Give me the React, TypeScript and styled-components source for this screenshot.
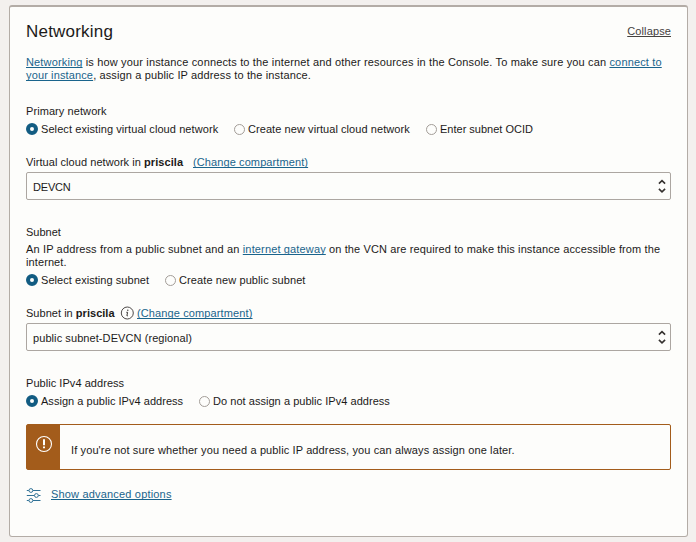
import React from 'react';
import styled, { createGlobalStyle } from 'styled-components';

const GlobalStyle = createGlobalStyle`
  * { box-sizing: border-box; }
  body {
    margin: 0;
    background: #f3f0ee;
    color: #1c1a19;
    font-family: "Liberation Sans", Arial, Helvetica, sans-serif;
    font-size: 11px;
    line-height: 13px;
  }
`;

const Page = styled.main`
  height: 542px;
  padding: 5px 8px 5px 9px;
  overflow: hidden;
`;

const Panel = styled.section`
  height: 532px;
  padding: 14px 16px 0;
  background: #fdfdfb;
  border: 1px solid #b3aca6;
  border-top-width: 2px;
  border-radius: 3px;
`;

const Header = styled.header`
  display: flex;
  justify-content: space-between;
  align-items: center;
  height: 20px;
`;

const Title = styled.h1`
  margin: 2px 0 0;
  font-size: 17px;
  line-height: 20px;
  font-weight: 400;
  letter-spacing: 0.2px;
`;

const Link = styled.a<{ $muted?: boolean; $track?: number }>`
  color: ${(p) => (p.$muted ? '#45413e' : '#1a648c')};
  letter-spacing: ${(p) => (p.$track === undefined ? 'inherit' : `${p.$track}px`)};
  text-decoration: underline;
  text-decoration-thickness: 1px;
  text-underline-offset: 1px;
  text-decoration-skip-ink: none;
`;

const Line = styled.div<{ $track?: number }>`
  height: 13px;
  white-space: nowrap;
  letter-spacing: ${(p) => p.$track ?? 0}px;
`;

const Intro = styled.div`
  margin-top: 15px;
`;

const Group = styled.div<{ $top: number }>`
  margin-top: ${(p) => p.$top}px;
`;

const Description = styled.div`
  margin-top: 4px;
`;

const RadioRow = styled.div`
  display: flex;
  gap: 16px;
  height: 13px;
  margin-top: 5px;
`;

const RadioLabel = styled.label<{ $width: number }>`
  display: flex;
  flex: none;
  width: ${(p) => p.$width}px;
  white-space: nowrap;
`;

const Dot = styled.span<{ $on?: boolean }>`
  flex: none;
  width: ${(p) => (p.$on ? 12 : 11)}px;
  height: ${(p) => (p.$on ? 12 : 11)}px;
  margin: ${(p) => (p.$on ? '0 3px 0 0' : '1px 3px 0 0')};
  border-radius: 50%;
  border: ${(p) => (p.$on ? '4px solid #125c82' : '1px solid #a39d98')};
  background: #fdfdfb;
`;

const FieldLabel = styled.div`
  display: flex;
  height: 13px;
  margin-top: 20px;
  white-space: nowrap;
`;

const FieldName = styled.span<{ $width: number; $track: number }>`
  flex: none;
  width: ${(p) => p.$width}px;
  letter-spacing: ${(p) => p.$track}px;
`;

const Tracked = styled.span<{ $track: number }>`
  letter-spacing: ${(p) => p.$track}px;
`;

const InfoIcon = styled.svg`
  flex: none;
  width: 14px;
  height: 14px;
  margin: -1px 3px 0 0;
`;

const SelectBox = styled.div`
  display: flex;
  justify-content: space-between;
  align-items: center;
  height: 28px;
  margin-top: 3px;
  padding: 2px 4px 0 6px;
  border: 1px solid #aca6a1;
  border-radius: 2px;
`;

const Arrows = styled.svg`
  width: 8px;
  height: 14px;
  margin-top: -2px;
`;

const Notice = styled.div`
  display: flex;
  height: 46px;
  margin-top: 16px;
  border: 1px solid #a35c1b;
  border-radius: 2px;
`;

const NoticeMark = styled.div`
  display: flex;
  justify-content: center;
  width: 33px;
  padding-top: 10px;
  background: #a35c1b;
`;

const NoticeText = styled.div`
  padding: 19px 0 0 11px;
`;

const Advanced = styled.div`
  display: flex;
  height: 16px;
  margin-top: 18px;
`;

const SlidersIcon = styled.svg`
  width: 16px;
  height: 16px;
  margin-right: 9px;
`;

type Option = { text: string; width: number; track: number; on?: boolean };

function Radios({ options }: { options: Option[] }) {
  return (
    <RadioRow>
      {options.map((o) => (
        <RadioLabel key={o.text} $width={o.width}>
          <Dot $on={o.on} />
          <Tracked $track={o.track}>{o.text}</Tracked>
        </RadioLabel>
      ))}
    </RadioRow>
  );
}

function Select({ value, track }: { value: string; track: number }) {
  return (
    <SelectBox>
      <Tracked $track={track}>{value}</Tracked>
      <Arrows viewBox="0 0 8 14" fill="none" stroke="#35312f" strokeWidth="1.6">
        <path d="M.9 4.6 4 1.7 7.1 4.6M.9 9.9 4 12.8 7.1 9.9" />
      </Arrows>
    </SelectBox>
  );
}

export default function App() {
  return (
    <Page>
      <GlobalStyle />
      <Panel>
        <Header>
          <Title>Networking</Title>
          <Link $muted $track={0.12}>Collapse</Link>
        </Header>
        <Intro>
          <Line $track={0.153}>
            <Link>Networking</Link> is how your instance connects to the internet and other resources in the
            Console. To make sure you can <Link>connect to</Link>
          </Line>
          <Line $track={0.13}>
            <Link>your instance</Link>, assign a public IP address to the instance.
          </Line>
        </Intro>

        <Group $top={23}>
          <Line $track={0.08}>Primary network</Line>
          <Radios
            options={[
              { text: 'Select existing virtual cloud network', width: 192, track: 0.08, on: true },
              { text: 'Create new virtual cloud network', width: 176, track: 0.07 },
              { text: 'Enter subnet OCID', width: 110, track: 0 },
            ]}
          />
          <FieldLabel>
            <FieldName $width={167} $track={0.06}>
              Virtual cloud network in <b>priscila</b>
            </FieldName>
            <Link $track={0.1}>(Change compartment)</Link>
          </FieldLabel>
          <Select value="DEVCN" track={-0.2} />
        </Group>

        <Group $top={26}>
          <Line>Subnet</Line>
          <Description>
            <Line $track={0.143}>
              An IP address from a public subnet and an <Link>internet gateway</Link>
              <Tracked $track={0.12}>
                {' '}on the VCN are required to make this instance accessible from the
              </Tracked>
            </Line>
            <Line $track={0.1}>internet.</Line>
          </Description>
          <Radios
            options={[
              { text: 'Select existing subnet', width: 123, track: 0.05, on: true },
              { text: 'Create new public subnet', width: 150, track: 0.1 },
            ]}
          />
          <FieldLabel>
            <FieldName $width={94} $track={0.03}>
              Subnet in <b>priscila</b>
            </FieldName>
            <InfoIcon viewBox="0 0 14 14" fill="none" stroke="#3a3634">
              <circle cx="7.3" cy="7" r="6" strokeWidth="0.9" />
              <path d="M6.3 6.3h1.3l-.7 3.2q0 .7 1.1.2" strokeWidth="1" />
              <circle cx="7.8" cy="4.3" r=".7" fill="#3a3634" stroke="none" />
            </InfoIcon>
            <Link $track={0.12}>(Change compartment)</Link>
          </FieldLabel>
          <Select value="public subnet-DEVCN (regional)" track={0.08} />
        </Group>

        <Group $top={26}>
          <Line $track={0.05}>Public IPv4 address</Line>
          <Radios
            options={[
              { text: 'Assign a public IPv4 address', width: 157, track: 0.03, on: true },
              { text: 'Do not assign a public IPv4 address', width: 192, track: 0.04 },
            ]}
          />
        </Group>

        <Notice>
          <NoticeMark>
            <svg width="18" height="18" viewBox="0 0 18 18" fill="none" stroke="#fff">
              <circle cx="9" cy="9" r="7.5" strokeWidth="1.1" />
              <path d="M9 4.2v6M9 11.5v1.8" strokeWidth="2" />
            </svg>
          </NoticeMark>
          <NoticeText>
            <Line $track={0.12}>
              If you're not sure whether you need a public IP address, you can always assign one later.
            </Line>
          </NoticeText>
        </Notice>

        <Advanced>
          <SlidersIcon viewBox="0 0 16 16" fill="none" stroke="#2f7196" strokeWidth="1">
            <path d="M.8 2.5h2M7 2.5h7.5M.8 7.5h7.5M12.5 7.5h2M.8 12.5h2M7 12.5h7.5" />
            <circle cx="4.9" cy="2.5" r="1.9" />
            <circle cx="10.4" cy="7.5" r="1.9" />
            <circle cx="4.9" cy="12.5" r="1.9" />
          </SlidersIcon>
          <Link $track={0.18}>Show advanced options</Link>
        </Advanced>
      </Panel>
    </Page>
  );
}
